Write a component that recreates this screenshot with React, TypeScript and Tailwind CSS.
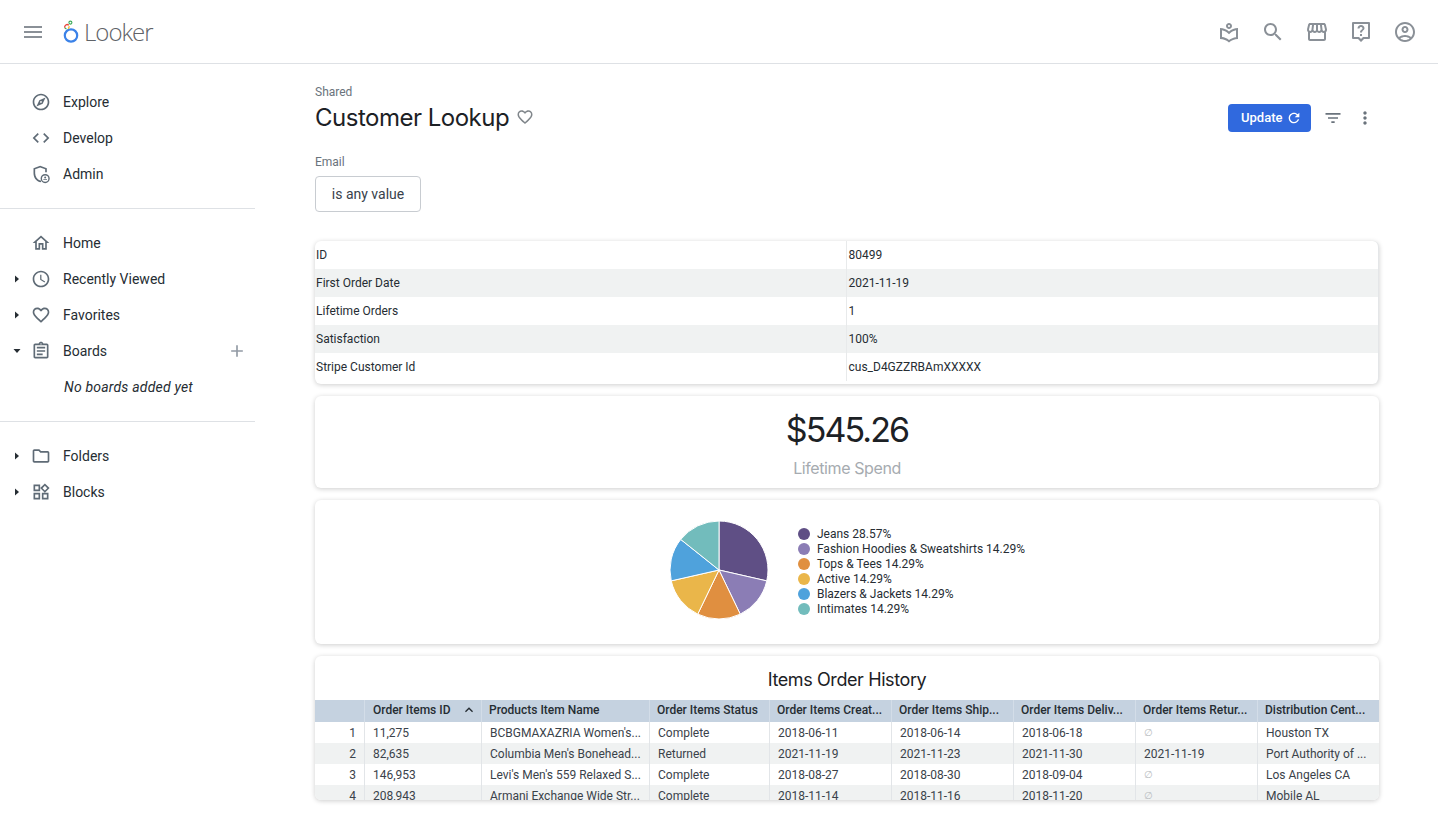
const icons: Record<string, string> = {
  menu: "M3 18h18v-2H3v2zm0-5h18v-2H3v2zm0-7v2h18V6H3z",
  explore: "M12 2C6.48 2 2 6.48 2 12s4.48 10 10 10 10-4.48 10-10S17.52 2 12 2zm0 18c-4.41 0-8-3.59-8-8s3.59-8 8-8 8 3.59 8 8-3.59 8-8 8zm-5.5-2.5l7.51-3.49L17.5 6.5 9.99 9.99 6.5 17.5zm5.5-6.6c.61 0 1.1.49 1.1 1.1s-.49 1.1-1.1 1.1-1.1-.49-1.1-1.1.49-1.1 1.1-1.1z",
  code: "M9.4 16.6L4.8 12l4.6-4.6L8 6l-6 6 6 6 1.4-1.4zm5.2 0l4.6-4.6-4.6-4.6L16 6l6 6-6 6-1.4-1.4z",
  home: "M12 5.69l5 4.5V18h-2v-6H9v6H7v-7.81l5-4.5M12 3L2 12h3v8h6v-6h2v6h6v-8h3L12 3z",
  clock: "M11.99 2C6.47 2 2 6.48 2 12s4.47 10 9.99 10C17.52 22 22 17.52 22 12S17.52 2 11.99 2zM12 20c-4.42 0-8-3.58-8-8s3.58-8 8-8 8 3.58 8 8-3.58 8-8 8zm.5-13H11v6l5.25 3.15.75-1.23-4.5-2.67z",
  heart: "M16.5 3c-1.74 0-3.41.81-4.5 2.09C10.91 3.81 9.24 3 7.5 3 4.42 3 2 5.42 2 8.5c0 3.78 3.4 6.86 8.55 11.54L12 21.35l1.45-1.32C18.6 15.36 22 12.28 22 8.5 22 5.42 19.58 3 16.5 3zm-4.4 15.55l-.1.1-.1-.1C7.14 14.24 4 11.39 4 8.5 4 6.5 5.5 5 7.5 5c1.54 0 3.04.99 3.57 2.36h1.87C13.46 5.99 14.96 5 16.5 5c2 0 3.5 1.5 3.5 3.5 0 2.89-3.14 5.74-7.9 10.05z",
  board: "M7 15h7v2H7zm0-4h10v2H7zm0-4h10v2H7zm12-4h-4.18C14.4 1.84 13.3 1 12 1c-1.3 0-2.4.84-2.82 2H5c-1.1 0-2 .9-2 2v14c0 1.1.9 2 2 2h14c1.1 0 2-.9 2-2V5c0-1.1-.9-2-2-2zm-7-.25c.41 0 .75.34.75.75s-.34.75-.75.75-.75-.34-.75-.75.34-.75.75-.75zM19 19H5V5h14v14z",
  folder: "M9.17 6l2 2H20v10H4V6h5.17M10 4H4c-1.1 0-1.99.9-1.99 2L2 18c0 1.1.9 2 2 2h16c1.1 0 2-.9 2-2V8c0-1.1-.9-2-2-2h-8l-2-2z",
  widgets: "M16.66 4.52l2.83 2.83-2.83 2.83-2.83-2.83 2.83-2.83M9 5v4H5V5h4m10 10v4h-4v-4h4M9 15v4H5v-4h4m7.66-13.31L11 7.34 16.66 13l5.66-5.66-5.66-5.65zM11 3H3v8h8V3zm10 10h-8v8h8v-8zm-10 0H3v8h8v-8z",
  admin: "M11 2L3 5v6c0 5 3.2 9.4 8 11l1-.4v-2.2l-1 .4c-3.6-1.4-6-5-6-8.8V6.4l6-2.2 6 2.2V10h2V5l-8-3zM17 12a5.5 5.5 0 100 11 5.5 5.5 0 000-11zm0 1.7a3.8 3.8 0 110 7.6 3.8 3.8 0 010-7.6zM17 15a1.2 1.2 0 100 2.4 1.2 1.2 0 000-2.4zm-2.2 4.2h4.4v-.8h-4.4z",
  book: "M12 9c1.66 0 3-1.34 3-3s-1.34-3-3-3-3 1.34-3 3 1.34 3 3 3zm0-4c.55 0 1 .45 1 1s-.45 1-1 1-1-.45-1-1 .45-1 1-1zm0 6.55C9.64 9.35 6.48 8 3 8v11c3.48 0 6.64 1.35 9 3.55 2.36-2.19 5.52-3.55 9-3.55V8c-3.48 0-6.64 1.35-9 3.55zm7 5.58c-2.53.34-4.93 1.3-7 2.82-2.06-1.52-4.47-2.49-7-2.83v-6.95c2.1.38 4.05 1.35 5.64 2.83L12 14.28l1.36-1.28c1.59-1.48 3.54-2.45 5.64-2.83v6.96z",
  search: "M15.5 14h-.79l-.28-.27C15.41 12.59 16 11.11 16 9.5 16 5.91 13.09 3 9.5 3S3 5.91 3 9.5 5.91 16 9.5 16c1.61 0 3.09-.59 4.23-1.57l.27.28v.79l5 4.99L20.49 19l-4.99-5zm-6 0C7.01 14 5 11.99 5 9.5S7.01 5 9.5 5 14 7.01 14 9.5 11.99 14 9.5 14z",
  store: "M21.9 8.89l-1.05-4.37c-.22-.9-1-1.52-1.91-1.52H5.05c-.9 0-1.69.63-1.9 1.52L2.1 8.89c-.24 1.02-.02 2.06.62 2.88.08.11.19.19.28.29V19c0 1.1.9 2 2 2h14c1.1 0 2-.9 2-2v-6.94c.09-.09.2-.18.28-.28.64-.82.87-1.87.62-2.89zm-2.99-3.9l1.05 4.37c.1.42.01.84-.25 1.17-.14.18-.44.47-.94.47-.61 0-1.14-.49-1.21-1.14L16.98 5l1.93-.01zM13 5h1.96l.54 4.52c.05.39-.07.78-.33 1.07-.22.26-.54.41-.95.41-.67 0-1.22-.59-1.22-1.31V5zM8.49 9.52L9.04 5H11v4.69c0 .72-.55 1.31-1.29 1.31-.34 0-.65-.15-.89-.41-.25-.29-.37-.68-.33-1.07zm-4.45-.16L5.05 5h1.97l-.58 4.86c-.08.65-.6 1.14-1.21 1.14-.49 0-.8-.29-.93-.47-.27-.32-.36-.75-.26-1.17zM5 19v-6.03c.08.01.15.03.23.03.87 0 1.66-.36 2.24-.95.6.6 1.4.95 2.31.95.87 0 1.65-.36 2.23-.93.59.57 1.39.93 2.29.93.84 0 1.64-.35 2.24-.95.58.59 1.37.95 2.24.95.08 0 .15-.02.23-.03V19H5z",
  help: "M4 2h16a1 1 0 011 1v15a1 1 0 01-1 1h-5l-3 3-3-3H4a1 1 0 01-1-1V3a1 1 0 011-1zm1 2v13h5l2 2 2-2h5V4H5zm6 10h2v2h-2v-2zm1-9c2 0 3.5 1.4 3.5 3.3 0 1.9-2.5 2.3-2.5 4.2h-2c0-2.6 2.5-2.8 2.5-4.2 0-.7-.7-1.3-1.5-1.3s-1.5.6-1.5 1.5h-2C8.5 6.5 10 5 12 5z",
  account: "M12 2C6.48 2 2 6.48 2 12s4.48 10 10 10 10-4.48 10-10S17.52 2 12 2zM7.35 18.5C8.66 17.56 10.26 17 12 17s3.34.56 4.65 1.5c-1.31.94-2.91 1.5-4.65 1.5s-3.34-.56-4.65-1.5zm10.79-1.38C16.45 15.8 14.32 15 12 15s-4.45.8-6.14 2.12C4.7 15.73 4 13.95 4 12c0-4.42 3.58-8 8-8s8 3.58 8 8c0 1.95-.7 3.73-1.86 5.12zM12 6c-1.93 0-3.5 1.57-3.5 3.5S10.07 13 12 13s3.5-1.57 3.5-3.5S13.93 6 12 6zm0 5c-.83 0-1.5-.67-1.5-1.5S11.17 8 12 8s1.5.67 1.5 1.5S12.83 11 12 11z",
  refresh: "M17.65 6.35C16.2 4.9 14.21 4 12 4c-4.42 0-7.99 3.58-7.99 8s3.57 8 7.99 8c3.73 0 6.84-2.55 7.73-6h-2.08c-.82 2.33-3.04 4-5.65 4-3.31 0-6-2.69-6-6s2.69-6 6-6c1.66 0 3.14.69 4.22 1.78L13 11h7V4l-2.35 2.35z",
  filter: "M10 18h4v-2h-4v2zM3 6v2h18V6H3zm3 7h12v-2H6v2z",
  more: "M12 8c1.1 0 2-.9 2-2s-.9-2-2-2-2 .9-2 2 .9 2 2 2zm0 2c-1.1 0-2 .9-2 2s.9 2 2 2 2-.9 2-2-.9-2-2-2zm0 6c-1.1 0-2 .9-2 2s.9 2 2 2 2-.9 2-2-.9-2-2-2z",
  plus: "M19 13h-6v6h-2v-6H5v-2h6V5h2v6h6v2z",
  caret: "M8 5l8 7-8 7z",
  caretDown: "M5 8l7 8 7-8z",
  up: "M7.4 15.4L12 10.8l4.6 4.6L18 14l-6-6-6 6z",
};

function Icon({ name, className }: { name: string; className: string }) {
  return (
    <svg viewBox="0 0 24 24" fill="currentColor" className={className}>
      <path d={icons[name]} fillRule="evenodd" />
    </svg>
  );
}

function NavRow({ icon, label, caret }: { icon: string; label: string; caret?: string }) {
  return (
    <div className="h-9 flex items-center pl-[11px] text-sm text-[#262d33]">
      <div className="w-3 h-3 flex items-center justify-center text-[#262d33]">
        {caret && <Icon name={caret} className="w-3 h-3" />}
      </div>
      <Icon name={icon} className="w-5 h-5 ml-2 text-[#5f6b76]" />
      <span className="ml-3">{label}</span>
    </div>
  );
}

const slices = [
  { label: "Jeans 28.57%", value: 28.57, color: "#5f4f85" },
  { label: "Fashion Hoodies & Sweatshirts 14.29%", value: 14.29, color: "#8b7db5" },
  { label: "Tops & Tees 14.29%", value: 14.29, color: "#e08f40" },
  { label: "Active 14.29%", value: 14.29, color: "#eab64a" },
  { label: "Blazers & Jackets 14.29%", value: 14.29, color: "#4fa2dc" },
  { label: "Intimates 14.29%", value: 14.29, color: "#72bcbc" },
];

function Pie() {
  let angle = 0;
  const point = (a: number) => {
    const rad = (a / 100) * 2 * Math.PI;
    return `${50 + 49 * Math.sin(rad)} ${50 - 49 * Math.cos(rad)}`;
  };
  return (
    <svg viewBox="0 0 100 100" className="w-[100px] h-[100px] mb-[5px]">
      {slices.map((s) => {
        const start = angle;
        angle += s.value;
        const large = s.value > 50 ? 1 : 0;
        return (
          <path
            key={s.label}
            d={`M50 50L${point(start)}A49 49 0 ${large} 1 ${point(angle)}Z`}
            fill={s.color}
            stroke="#fff"
            strokeWidth="1"
          />
        );
      })}
    </svg>
  );
}

const infoRows = [
  ["ID", "80499"],
  ["First Order Date", "2021-11-19"],
  ["Lifetime Orders", "1"],
  ["Satisfaction", "100%"],
  ["Stripe Customer Id", "cus_D4GZZRBAmXXXXX"],
];

const headers = [
  "",
  "Order Items ID",
  "Products Item Name",
  "Order Items Status",
  "Order Items Creat...",
  "Order Items Ship...",
  "Order Items Deliv...",
  "Order Items Retur...",
  "Distribution Cent...",
];

const orders = [
  ["1", "11,275", "BCBGMAXAZRIA Women's...", "Complete", "2018-06-11", "2018-06-14", "2018-06-18", "∅", "Houston TX"],
  ["2", "82,635", "Columbia Men's Bonehead...", "Returned", "2021-11-19", "2021-11-23", "2021-11-30", "2021-11-19", "Port Authority of ..."],
  ["3", "146,953", "Levi's Men's 559 Relaxed S...", "Complete", "2018-08-27", "2018-08-30", "2018-09-04", "∅", "Los Angeles CA"],
  ["4", "208,943", "Armani Exchange Wide Str...", "Complete", "2018-11-14", "2018-11-16", "2018-11-20", "∅", "Mobile AL"],
];

const gridCols = "grid grid-cols-[49px_117px_168px_120px_122px_122px_122px_122px_122px]";
const card = "bg-white rounded-md shadow-[0_1px_5px_rgba(0,0,0,0.2)]";

export default function App() {
  return (
    <div className="h-screen overflow-hidden bg-white font-['Roboto',sans-serif] text-[#262d33]">
      {/* Top bar */}
      <header className="h-16 border-b border-[#dee1e5] flex items-center pl-[21px] pr-[21px]">
        <Icon name="menu" className="w-6 h-6 text-[#8a9097]" />
        <svg viewBox="0 0 16 24" className="w-4 h-6 ml-[18px]">
          <circle cx="8" cy="15.5" r="6.2" fill="none" stroke="#3b82e8" strokeWidth="2.2" />
          <path d="M5.8 5.2a2.5 2.5 0 00-4 2.6" fill="none" stroke="#e8453c" strokeWidth="1.4" />
          <path d="M1.9 7.9a2.5 2.5 0 001.6 1" fill="none" stroke="#3dab58" strokeWidth="1.4" />
          <path d="M6.1 6.2a2.5 2.5 0 01-1.1 2.5" fill="none" stroke="#f9bb2d" strokeWidth="1.4" />
          <circle cx="7.4" cy="2.6" r="1.5" fill="none" stroke="#3dab58" strokeWidth="1.1" />
        </svg>
        <span className="ml-[5px] text-2xl font-['Open_Sans',sans-serif] font-light text-[#5f6368] tracking-[-1px]">Looker</span>
        <div className="ml-auto flex items-center gap-5 text-[#8a9097]">
          <Icon name="book" className="w-6 h-6" />
          <Icon name="search" className="w-6 h-6" />
          <Icon name="store" className="w-6 h-6" />
          <Icon name="help" className="w-6 h-6" />
          <Icon name="account" className="w-6 h-6" />
        </div>
      </header>

      <div className="flex">
        {/* Sidebar */}
        <aside className="w-[255px] shrink-0 pt-5">
          <NavRow icon="explore" label="Explore" />
          <NavRow icon="code" label="Develop" />
          <NavRow icon="admin" label="Admin" />
          <div className="mt-4 mb-4 border-t border-[#dee1e5]" />
          <NavRow icon="home" label="Home" />
          <NavRow icon="clock" label="Recently Viewed" caret="caret" />
          <NavRow icon="heart" label="Favorites" caret="caret" />
          <div className="relative">
            <NavRow icon="board" label="Boards" caret="caretDown" />
            <Icon name="plus" className="absolute right-[8px] top-[8px] w-5 h-5 text-[#939ba5]" />
          </div>
          <div className="h-9 flex items-center pl-[64px] text-sm italic tracking-[0.2px]">No boards added yet</div>
          <div className="mt-4 mb-4 border-t border-[#dee1e5]" />
          <NavRow icon="folder" label="Folders" caret="caret" />
          <NavRow icon="widgets" label="Blocks" caret="caret" />
        </aside>

        {/* Dashboard */}
        <main className="flex-1 pl-[60px] pr-[59px] pt-5">
          <div className="text-xs leading-4 text-[#6a737c]">Shared</div>
          <div className="h-9 flex items-center">
            <h1 className="text-2xl font-['Inter',sans-serif] text-[#1c2125] tracking-[-0.5px]">Customer Lookup</h1>
            <Icon name="heart" className="w-[18px] h-[18px] ml-[7px] mt-[-2px] text-[#80868b]" />
            <button className="ml-auto h-7 w-[83px] rounded bg-[#3069de] text-white text-[13px] font-medium flex items-center pl-[13px] gap-1">
              Update
              <Icon name="refresh" className="w-4 h-4" />
            </button>
            <Icon name="filter" className="w-5 h-5 ml-3 text-[#6a737c]" />
            <Icon name="more" className="w-5 h-5 ml-3 mr-1 text-[#6a737c]" />
          </div>

          <div className="mt-[18px] text-xs leading-4 text-[#6a737c]">Email</div>
          <button className="mt-[6px] h-9 w-[106px] rounded border border-[#c8ccd1] text-sm text-[#39424b]">is any value</button>

          {/* Customer details */}
          <div className={`mt-[29px] pb-[3px] overflow-hidden border-r border-[#e4e6e8] ${card}`}>
            {infoRows.map(([name, value], i) => (
              <div key={name} className={`h-7 grid grid-cols-2 items-center text-xs ${i % 2 === 1 ? "bg-[#f0f2f2]" : ""}`}>
                <div className="h-full flex items-center pl-px border-r border-[#e8eaeb]">{name}</div>
                <div className="pl-[2px]">{value}</div>
              </div>
            ))}
          </div>

          {/* Lifetime spend */}
          <div className={`mt-3 h-[92px] flex flex-col items-center ${card}`}>
            <div className="mt-[12px] text-[34px] leading-[44px] tracking-[-1.9px] font-['Inter',sans-serif] text-[#1c2125]">$545.26</div>
            <div className="mt-[4px] text-base tracking-[-0.4px] font-['Inter',sans-serif] text-[#a6abb0]">Lifetime Spend</div>
          </div>

          {/* Category pie */}
          <div className={`mt-3 h-[144px] flex items-center justify-center ${card}`}>
            <Pie />
            <div className="ml-[29px] mb-[2px] flex flex-col">
              {slices.map((s) => (
                <div key={s.label} className="h-[15px] flex items-center text-xs">
                  <span className="w-3 h-3 rounded-full" style={{ backgroundColor: s.color }} />
                  <span className="ml-[7px]">{s.label}</span>
                </div>
              ))}
            </div>
          </div>

          {/* Order history */}
          <div className={`mt-3 h-[144px] overflow-hidden ${card}`}>
            <div className="h-11 pt-[3px] flex items-center justify-center text-lg tracking-[-0.4px] font-['Inter',sans-serif] text-[#1c2125]">Items Order History</div>
            <div className={`${gridCols} h-[22px] items-center bg-[#c5d2e0] text-xs font-medium`}>
              {headers.map((h, i) => (
                <div key={i} className={`h-full flex items-center pb-[3px] whitespace-nowrap ${i === 1 ? "pl-2" : "pl-[7px]"} ${i > 0 ? "border-l border-[#d3dde8]" : ""}`}>
                  {h}
                  {i === 1 && <Icon name="up" className="w-4 h-4 ml-auto mr-[4px]" />}
                </div>
              ))}
            </div>
            {orders.map((row, r) => (
              <div key={r} className={`${gridCols} h-[21px] items-center text-xs text-[#3a424a] ${r % 2 === 1 ? "bg-[#f0f2f2]" : ""}`}>
                {row.map((cell, i) => (
                  <div
                    key={i}
                    className={`h-full flex items-center whitespace-nowrap ${i === 0 ? "justify-end pr-2" : "pl-2 border-l border-[#e2e5e8]"} ${cell === "∅" ? "text-[#b9bdc1] text-[10px]" : ""}`}
                  >
                    {cell}
                  </div>
                ))}
              </div>
            ))}
          </div>
        </main>
      </div>
    </div>
  );
}
